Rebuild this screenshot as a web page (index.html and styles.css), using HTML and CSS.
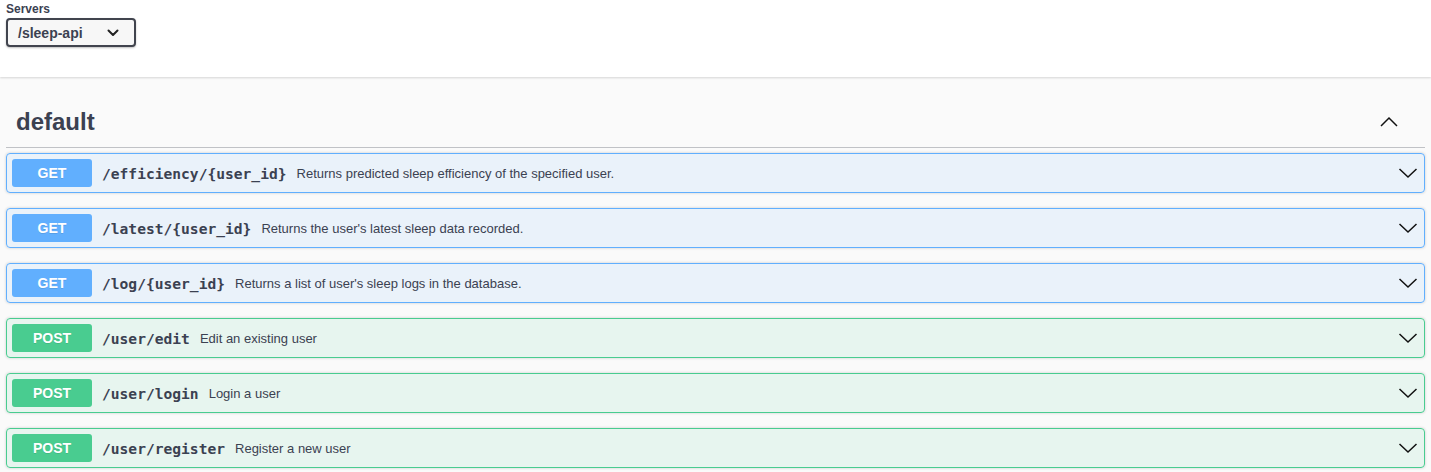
FILE: index.html
```html
<!DOCTYPE html>
<html lang="en">
<head>
<meta charset="utf-8">
<title>Swagger UI</title>
<link rel="stylesheet" href="styles.css">
</head>
<body>
<div class="scheme">
  <div class="servers-label">Servers</div>
  <div class="select">
    <span>/sleep-api</span>
    <svg class="select-arrow" width="12" height="8" viewBox="0 0 12 8"><polyline points="1.5,1.5 6,6 10.5,1.5" fill="none" stroke="#222" stroke-width="2" stroke-linecap="round" stroke-linejoin="round"/></svg>
  </div>
</div>
<div class="main">
  <div class="tag">
    <h3 class="tag-title">
      <span>default</span>
      <svg class="tag-arrow" width="20" height="20" viewBox="0 0 20 20"><polyline points="2,14 10,6 18,14" fill="none" stroke="#111" stroke-width="1.5" stroke-linejoin="miter"/></svg>
    </h3>
    <div class="op get">
      <span class="method">GET</span>
      <span class="path">/efficiency/{user_id}</span>
      <span class="desc">Returns predicted sleep efficiency of the specified user.</span>
      <svg class="op-arrow" width="20" height="20" viewBox="0 0 20 20"><polyline points="1.5,6 10,14 18.5,6" fill="none" stroke="#111" stroke-width="1.5"/></svg>
    </div>
    <div class="op get">
      <span class="method">GET</span>
      <span class="path">/latest/{user_id}</span>
      <span class="desc">Returns the user's latest sleep data recorded.</span>
      <svg class="op-arrow" width="20" height="20" viewBox="0 0 20 20"><polyline points="1.5,6 10,14 18.5,6" fill="none" stroke="#111" stroke-width="1.5"/></svg>
    </div>
    <div class="op get">
      <span class="method">GET</span>
      <span class="path">/log/{user_id}</span>
      <span class="desc">Returns a list of user's sleep logs in the database.</span>
      <svg class="op-arrow" width="20" height="20" viewBox="0 0 20 20"><polyline points="1.5,6 10,14 18.5,6" fill="none" stroke="#111" stroke-width="1.5"/></svg>
    </div>
    <div class="op post">
      <span class="method">POST</span>
      <span class="path">/user/edit</span>
      <span class="desc">Edit an existing user</span>
      <svg class="op-arrow" width="20" height="20" viewBox="0 0 20 20"><polyline points="1.5,6 10,14 18.5,6" fill="none" stroke="#111" stroke-width="1.5"/></svg>
    </div>
    <div class="op post">
      <span class="method">POST</span>
      <span class="path">/user/login</span>
      <span class="desc">Login a user</span>
      <svg class="op-arrow" width="20" height="20" viewBox="0 0 20 20"><polyline points="1.5,6 10,14 18.5,6" fill="none" stroke="#111" stroke-width="1.5"/></svg>
    </div>
    <div class="op post">
      <span class="method">POST</span>
      <span class="path">/user/register</span>
      <span class="desc">Register a new user</span>
      <svg class="op-arrow" width="20" height="20" viewBox="0 0 20 20"><polyline points="1.5,6 10,14 18.5,6" fill="none" stroke="#111" stroke-width="1.5"/></svg>
    </div>
  </div>
</div>
</body>
</html>
```
FILE: styles.css
```css
* { box-sizing: border-box; }
html, body { margin: 0; padding: 0; }
body {
  background: #fafafa;
  font-family: "Liberation Sans", Arial, sans-serif;
  color: #3b4151;
}
.scheme {
  background: #fff;
  height: 77px;
  padding: 2px 6px 0;
  box-shadow: 0 1px 2px 0 rgba(0,0,0,0.15);
  position: relative;
}
.servers-label {
  font-weight: bold;
  font-size: 12px;
  line-height: 14px;
}
.select {
  margin-top: 2px;
  width: 130px;
  height: 29px;
  border: 2px solid #41444e;
  border-radius: 4px;
  box-shadow: 0 1px 2px 0 rgba(0,0,0,0.25);
  background: #f7f7f7;
  padding: 0 15px 0 10px;
  display: flex;
  align-items: center;
  justify-content: space-between;
  font-weight: bold;
  font-size: 14px;
  color: #3b4151;
}
.main {
  padding: 20px 6px 0;
}
.tag-title {
  margin: 0 0 5px;
  padding: 10px 26px 10px 10px;
  height: 51px;
  border-bottom: 1px solid rgba(59,65,81,0.3);
  display: flex;
  align-items: center;
  justify-content: space-between;
  font-size: 24px;
  font-weight: bold;
  line-height: 30px;
  color: #3b4151;
}
.tag-arrow { display: block; }
.op {
  display: flex;
  align-items: center;
  height: 40px;
  padding: 5px;
  margin: 0 0 15px;
  border: 1px solid;
  border-radius: 4px;
  box-shadow: 0 0 3px rgba(0,0,0,0.19);
}
.op.get { background: rgba(97,175,254,0.1); border-color: #61affe; }
.op.post { background: rgba(73,204,144,0.1); border-color: #49cc90; }
.method {
  width: 80px;
  height: 28px;
  border-radius: 3px;
  color: #fff;
  font-weight: bold;
  font-size: 14px;
  display: flex;
  align-items: center;
  justify-content: center;
  text-shadow: 0 1px 0 rgba(0,0,0,0.1);
}
.get .method { background: #61affe; }
.post .method { background: #49cc90; }
.path {
  padding: 0 10px;
  font-family: "DejaVu Sans Mono", monospace;
  font-weight: bold;
  font-size: 14.6px;
  color: #3b4151;
}
.desc {
  flex: 1;
  font-size: 13px;
  color: #3b4151;
}
.op-arrow { display: block; margin-right: 1px; }
```
